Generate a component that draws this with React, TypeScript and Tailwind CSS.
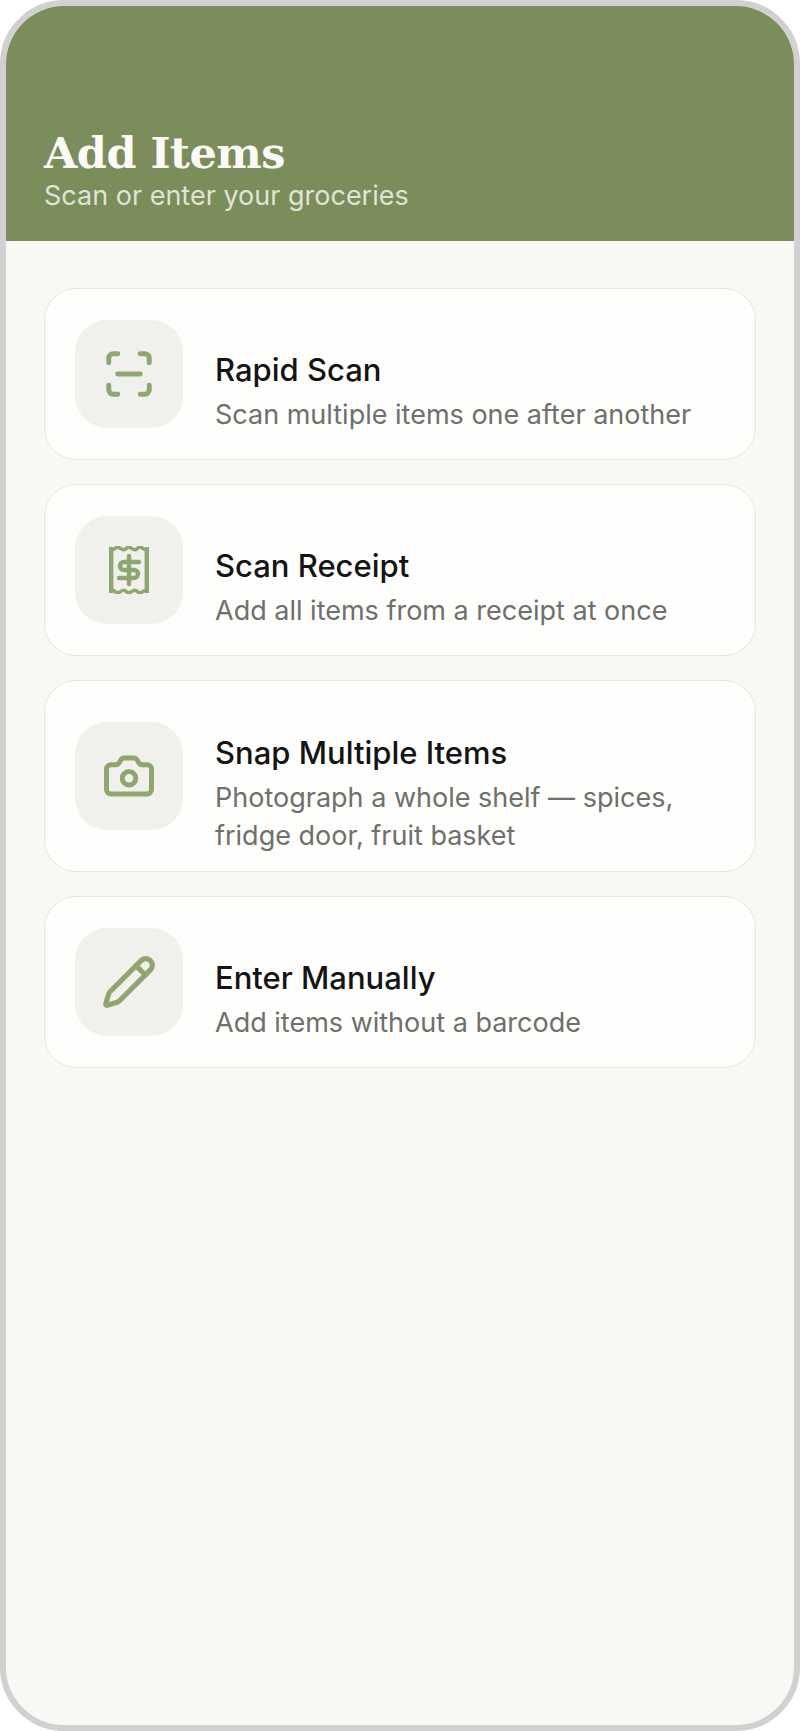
import { Camera, Pencil, ScanLine } from "lucide-react";
import type { ReactNode } from "react";

const ReceiptIcon = () => (
	<svg viewBox="0 0 40 48" className="h-12 w-10" fill="none" stroke="#8fa670">
		<path d="M2.2 1 V47 M37.8 1 V47" strokeWidth="4.4" />
		<path d="M1 2.5 q2.5 2.6 5 0 t5.6 0 t5.6 0 t5.6 0 t5.6 0 t5.6 0 t5 0" strokeWidth="3.4" />
		<path d="M1 45.5 q2.5 -2.6 5 0 t5.6 0 t5.6 0 t5.6 0 t5.6 0 t5.6 0 t5 0" strokeWidth="3.4" />
		<path d="M30 16 H15 a4 4 0 0 0 0 8 H25 a4 4 0 0 1 0 8 H10 M20 10 V38" strokeWidth="4.4" strokeLinecap="round" />
	</svg>
);

interface Option {
	title: string;
	lines: string[];
	icon: ReactNode;
	card: string;
}

const options: Option[] = [
	{
		title: "Rapid Scan",
		lines: ["Scan multiple items one after another"],
		icon: <ScanLine size={54} strokeWidth={2.2} />,
		card: "h-[172px]",
	},
	{
		title: "Scan Receipt",
		lines: ["Add all items from a receipt at once"],
		icon: <ReceiptIcon />,
		card: "h-[172px]",
	},
	{
		title: "Snap Multiple Items",
		lines: ["Photograph a whole shelf — spices,", "fridge door, fruit basket"],
		icon: <Camera size={54} strokeWidth={2.2} />,
		card: "h-[192px]",
	},
	{
		title: "Enter Manually",
		lines: ["Add items without a barcode"],
		icon: <Pencil size={56} strokeWidth={2.2} />,
		card: "h-[172px]",
	},
];

export default function App() {
	return (
		<div className="h-[1731px] w-[800px] bg-white font-['Inter',sans-serif]">
			<div className="flex h-full flex-col overflow-hidden rounded-[64px] border-[6px] border-[#d1d1d1] bg-[#f9f8f4]">
				{/* Header */}
				<div className="h-[235px] shrink-0 bg-[#7a8d5a] pl-[38px] pt-[122px]">
					<h1 className="font-['DejaVu_Serif',serif] text-[43px] leading-[50px] font-bold tracking-[-0.5px] text-[#fbfaf7]">
						Add Items
					</h1>
					<p className="mt-[2px] text-[27px] leading-[32px] text-[#dfe4d6]">Scan or enter your groceries</p>
				</div>

				{/* Options */}
				<div className="flex flex-col gap-6 px-[38px] pt-[47px]">
					{options.map((option) => (
						<div
							key={option.title}
							className={`flex items-center gap-8 rounded-[32px] border-[1.5px] border-[#e8e6e0] bg-[#fefefd] pl-[30px] ${option.card}`}
						>
							<div className="flex h-[108px] w-[108px] shrink-0 items-center justify-center rounded-[32px] bg-[#f0f1ed] text-[#8fa670]">
								{option.icon}
							</div>
							<div className="pt-9">
								<div className="text-[31px] leading-[40px] font-medium text-[#141414]">{option.title}</div>
								<div className="mt-[6px] text-[27px] leading-[38px] text-[#6f6f6b]">
									{option.lines.map((line) => (
										<div key={line}>{line}</div>
									))}
								</div>
							</div>
						</div>
					))}
				</div>
			</div>
		</div>
	);
}
